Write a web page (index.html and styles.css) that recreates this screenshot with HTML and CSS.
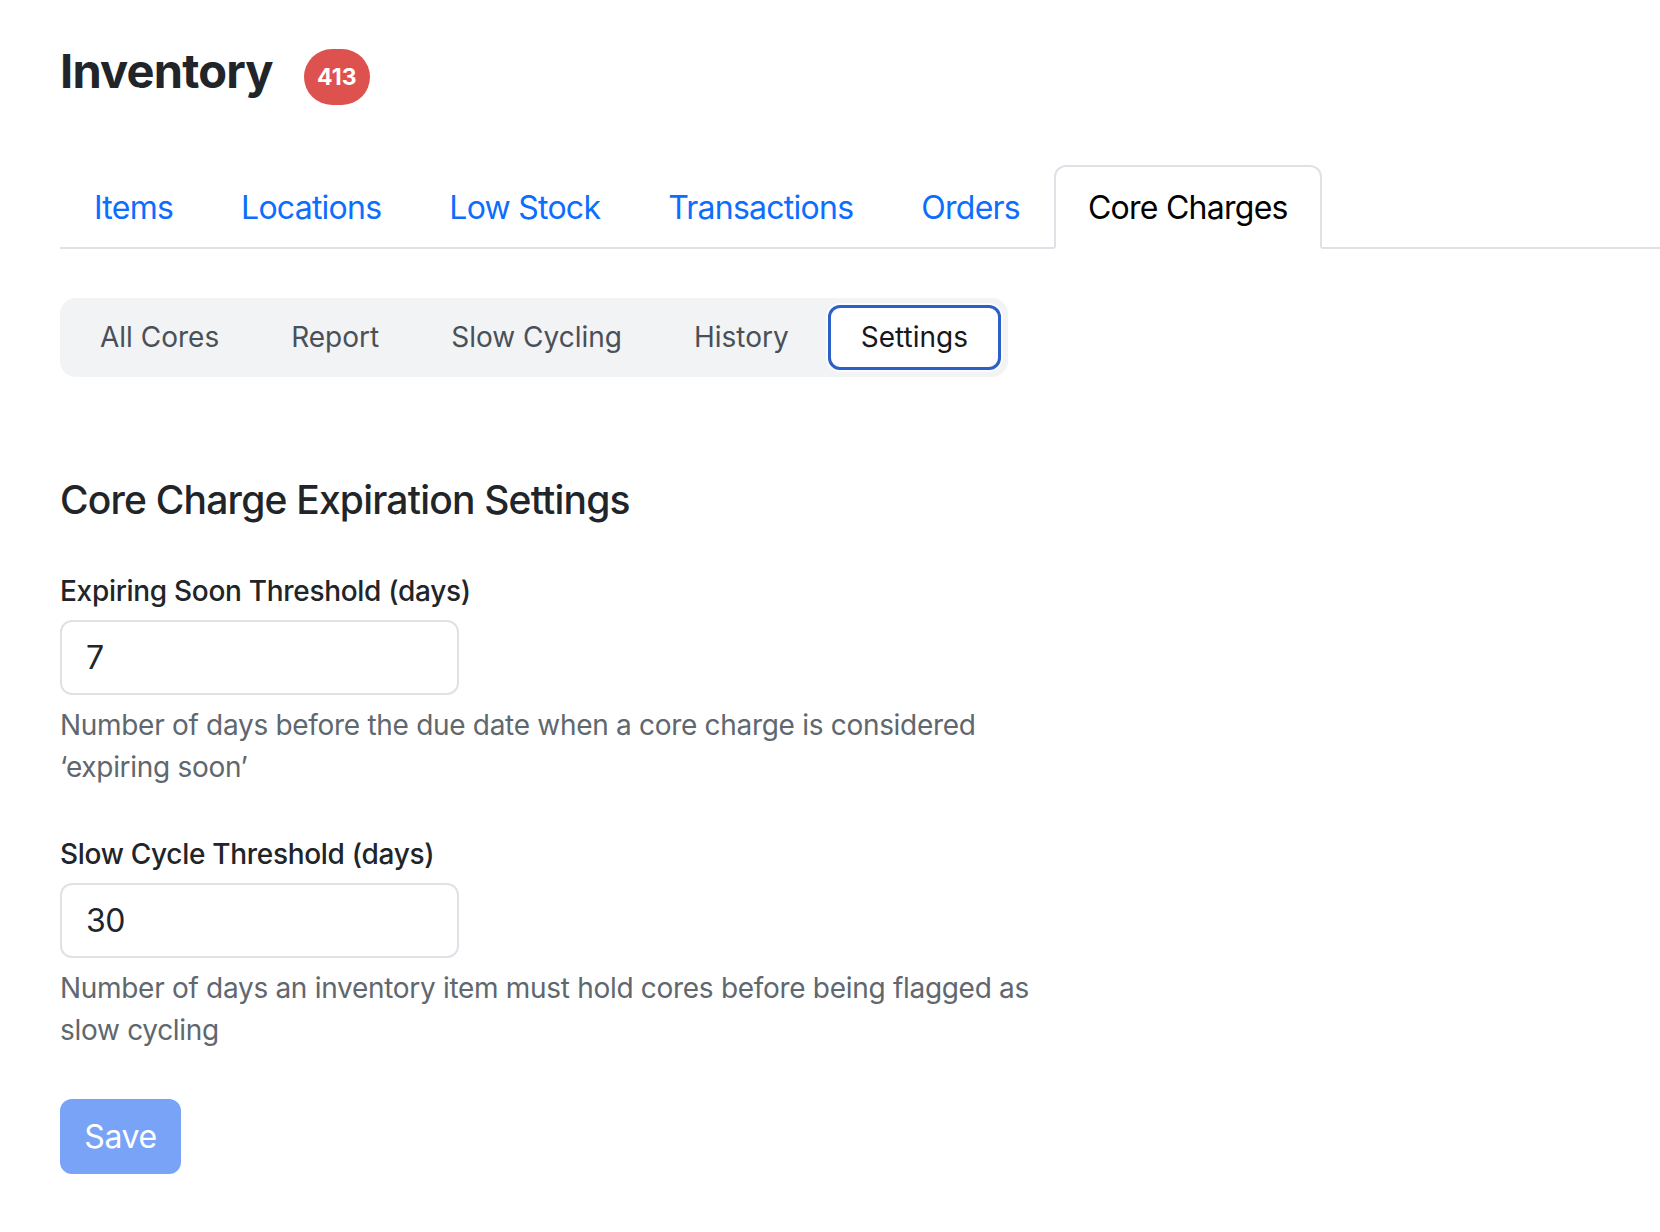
FILE: index.html
```html
<!DOCTYPE html>
<html lang="en">
<head>
    <meta charset="UTF-8">
    <title>Inventory</title>
    <link rel="stylesheet" href="styles.css">
</head>
<body>

    <div class="page">

        <div class="page-header">
            <h1 class="page-title">Inventory</h1>
            <span class="count-badge">413</span>
        </div>

        <ul class="main-tabs">
            <li><a class="main-tab" href="#">Items</a></li>
            <li><a class="main-tab" href="#">Locations</a></li>
            <li><a class="main-tab" href="#">Low Stock</a></li>
            <li><a class="main-tab" href="#">Transactions</a></li>
            <li><a class="main-tab" href="#">Orders</a></li>
            <li><a class="main-tab active" href="#">Core Charges</a></li>
        </ul>

        <div class="sub-tabs">
            <button class="sub-tab" type="button">All Cores</button>
            <button class="sub-tab" type="button">Report</button>
            <button class="sub-tab" type="button">Slow Cycling</button>
            <button class="sub-tab" type="button">History</button>
            <button class="sub-tab active" type="button">Settings</button>
        </div>

        <div class="settings">
            <h5 class="settings-title">Core Charge Expiration Settings</h5>

            <div class="field">
                <label class="field-label" for="expiring-days">Expiring Soon Threshold (days)</label>
                <input class="field-input" id="expiring-days" type="text" value="7">
                <div class="field-help">Number of days before the due date when a core charge is considered &lsquo;expiring soon&rsquo;</div>
            </div>

            <div class="field">
                <label class="field-label" for="slow-days">Slow Cycle Threshold (days)</label>
                <input class="field-input" id="slow-days" type="text" value="30">
                <div class="field-help">Number of days an inventory item must hold cores before being flagged as slow cycling</div>
            </div>

            <button class="save-button" type="button" disabled>Save</button>
        </div>

    </div>

</body>
</html>
```

FILE: styles.css
```css
* {
    margin: 0;
    padding: 0;
    box-sizing: border-box;
}
body {
    font-family: Inter, "Noto Sans", sans-serif;
    font-size: 32px;
    line-height: 48px;
    color: #212529;
    background: #fff;
}

/***************************************************/

.page {
    padding: 37px 0 0 60px;
}

.page-header {
    display: flex;
    align-items: center;
    gap: 31px;
}
.page-title {
    font-size: 47px;
    font-weight: 700;
    line-height: 60px;
    letter-spacing: -0.8px;
}
.count-badge {
    display: inline-block;
    margin-top: 12px;
    width: 66px;
    height: 56px;
    border-radius: 28px;
    background: #dd524f;
    color: #fff;
    font-size: 23px;
    font-weight: 700;
    line-height: 56px;
    text-align: center;
}

/*********************/

.main-tabs {
    display: flex;
    list-style: none;
    margin-top: 60px;
    border-bottom: 2px solid #dee2e6;
}
.main-tab {
    display: block;
    padding: 17px 32px 15px;
    border: 2px solid transparent;
    border-radius: 12px 12px 0 0;
    margin-bottom: -2px;
    color: #0d6efd;
    text-decoration: none;
    letter-spacing: -0.75px;
}
.main-tab.active {
    color: #000;
    background: #fff;
    border-color: #dee2e6 #dee2e6 #fff;
}

/*********************/

.sub-tabs {
    display: inline-flex;
    gap: 6px;
    margin-top: 49px;
    padding: 7px;
    border-radius: 16px;
    background: #f1f3f5;
}
.sub-tab {
    font: inherit;
    font-size: 28px;
    line-height: 43px;
    color: #495057;
    background: transparent;
    border: 3px solid transparent;
    border-radius: 12px;
    padding: 8px 30px;
}
.sub-tab.active {
    color: #16181b;
    background: #fff;
    border-color: #2d5fc8;
    box-shadow: 0 0 0 2px #fafbfc;
}

/*********************/

.settings {
    width: 985px;
    margin-top: 99px;
}
.settings-title {
    font-size: 39px;
    font-weight: 500;
    line-height: 48px;
    letter-spacing: -0.8px;
    margin-bottom: 46px;
}
.field {
    margin-bottom: 45px;
}
.field-label {
    display: block;
    font-size: 28px;
    font-weight: 500;
    line-height: 42px;
    letter-spacing: -0.3px;
    margin-bottom: 8px;
}
.field-input {
    display: block;
    width: 399px;
    height: 75px;
    padding: 12px 24px;
    font: inherit;
    letter-spacing: -0.4px;
    color: #212529;
    border: 2px solid #dee2e6;
    border-radius: 12px;
    outline: none;
}
.field-help {
    margin-top: 9px;
    font-size: 28px;
    line-height: 42px;
    letter-spacing: -0.3px;
    color: #60676e;
}
.save-button {
    margin-top: 3px;
    font: inherit;
    letter-spacing: -0.4px;
    color: #fff;
    background: #79a3f7;
    border: 0;
    border-radius: 12px;
    width: 121px;
    height: 75px;
}
```
